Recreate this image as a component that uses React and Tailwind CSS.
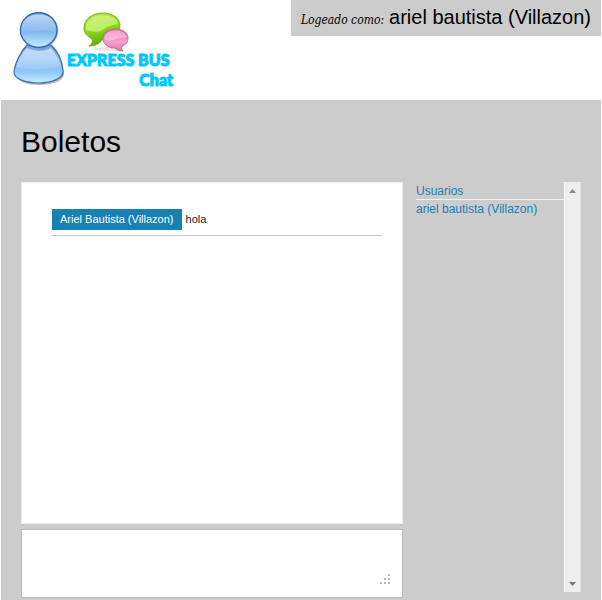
import React from "react";

function PersonIcon() {
  return (
    <svg viewBox="0 0 54 76" className="h-[76px] w-[54px] shrink-0" aria-hidden="true">
      <defs>
        <linearGradient id="bodyFill" x1="0" y1="0" x2="0" y2="1">
          <stop offset="0" stopColor="#6aa3e2" />
          <stop offset="0.35" stopColor="#8dbff3" />
          <stop offset="0.7" stopColor="#8ec6f8" />
          <stop offset="1" stopColor="#c9f1ff" />
        </linearGradient>
        <linearGradient id="headFill" x1="0" y1="0" x2="0" y2="1">
          <stop offset="0" stopColor="#5f9ade" />
          <stop offset="0.5" stopColor="#78b1ee" />
          <stop offset="1" stopColor="#c4efff" />
        </linearGradient>
        <linearGradient id="gloss" x1="0" y1="0" x2="0" y2="1">
          <stop offset="0" stopColor="#ffffff" stopOpacity="0.6" />
          <stop offset="1" stopColor="#ffffff" stopOpacity="0.12" />
        </linearGradient>
      </defs>
      <path d="M14 36C8 43 2 56 3 63c1 7 12 10 24 10s24-4 24-11C51 53 46 42 39 35z" fill="#6b7280" opacity="0.5" />
      <path d="M14 33C8 39 2 51 1 60c0 7 12 11 25 11s25-5 24-12C49 49 45 39 38 33z" fill="url(#bodyFill)" stroke="#3e6eb2" strokeWidth="1.2" />
      <path d="M14 36C9 41 5 48 3 55c13 3 30 3 45-1C46 47 42 41 38 36c-8 4-16 4-24 0z" fill="url(#gloss)" />
      <ellipse cx="26.500" cy="18.700" rx="19" ry="18" fill="#6b7280" opacity="0.4" />
      <ellipse cx="25.700" cy="18" rx="18.300" ry="17.400" fill="url(#headFill)" stroke="#3568ae" strokeWidth="1.300" />
      <path d="M9 20C7 8 16 2.500 26 2.500S45 9 42 19c-10-2-21 0-33 1z" fill="url(#gloss)" />
    </svg>
  );
}

function BubblesIcon() {
  return (
    <svg viewBox="0 0 48 40" className="h-10 w-12" aria-hidden="true">
      <defs>
        <linearGradient id="greenFill" x1="0" y1="0" x2="0.3" y2="1">
          <stop offset="0" stopColor="#aee63c" />
          <stop offset="0.55" stopColor="#93d91d" />
          <stop offset="1" stopColor="#5fa80a" />
        </linearGradient>
        <linearGradient id="pinkFill" x1="0" y1="0" x2="0" y2="1">
          <stop offset="0" stopColor="#e670ae" />
          <stop offset="0.6" stopColor="#f6a0cf" />
          <stop offset="1" stopColor="#e36fb0" />
        </linearGradient>
      </defs>
      <ellipse cx="27" cy="37" rx="15" ry="2" fill="#e6e6e6" />
      <path d="M20 1C8 1 1 8 1 16c0 5 3 8 8 11 1 3 0 5-3 7 6 0 10-2 13-6 11-1 18-7 18-14C37 6 30 1 20 1z" fill="url(#greenFill)" stroke="#69ab14" strokeWidth="0.8" />
      <path d="M3 18C2 9 9 3 20 3c9 0 14 4 15 9-5 1-9 1-14 5-7 5-13 2-18 1z" fill="#e4ffa8" opacity="0.55" />
      <path d="M32.500 17C25 17 20 21 20 26.500S25 36 32 36c2 2 5 3 8 3-2-2-2-3-1-5 4-1 6-4 6-8 0-5-5-9-12.500-9z" fill="url(#pinkFill)" stroke="#c8508f" strokeWidth="0.8" />
      <path d="M21.500 27c0-5 4-8.500 11-8.500 6 0 10 3 11 7-5 0-8 0-12 2-4 2-7 1-10-.5z" fill="#ffffff" opacity="0.35" />
    </svg>
  );
}

function Logo() {
  return (
    <div className="flex pt-3 pl-3">
      <PersonIcon />
      <div className="flex w-[106px] flex-col font-[Lato,sans-serif] text-[16px] leading-5 font-black whitespace-nowrap text-[#00c8ff] [-webkit-text-stroke:1px_#00c8ff]">
        <div className="h-[38px] pl-4">
          <BubblesIcon />
        </div>
        <span>EXPRESS BUS</span>
        <span className="text-right">Chat</span>
      </div>
    </div>
  );
}

function Message({ author, text }) {
  return (
    <li className="flex items-center gap-1 border-b border-[#c9c9c9] pb-[5px] text-[11px] leading-[21px] text-[#222]">
      <span className="bg-[#1781b5] px-2 text-white">{author}</span>
      <span>{text}</span>
    </li>
  );
}

function UserList() {
  return (
    <aside className="flex h-[410px] min-w-0 flex-1 text-[12px] text-[#1781b5]">
      <div className="min-w-0 flex-1 whitespace-nowrap">
        <h2 className="border-b border-[#f0f0f0] pt-px leading-4">Usuarios</h2>
        <a href="#ariel" className="block leading-[18px]">ariel bautista (Villazon)</a>
      </div>
      <div className="flex w-[17px] flex-col justify-between border-x border-[#f8f8f8] border-r-[#e3e3e3] bg-[#eeeeee]">
        <button type="button" aria-label="Subir" className="flex h-[17px] items-center justify-center">
          <svg viewBox="0 0 7 4" className="h-1 w-[7px]"><path d="M0 4L3.500 0 7 4z" fill="#888" /></svg>
        </button>
        <button type="button" aria-label="Bajar" className="flex h-[17px] items-center justify-center">
          <svg viewBox="0 0 7 4" className="h-1 w-[7px]"><path d="M0 0h7L3.500 4z" fill="#777" /></svg>
        </button>
      </div>
    </aside>
  );
}

export default function App() {
  return (
    <div className="min-h-screen bg-white px-px font-['Liberation_Sans',Arial,sans-serif] text-black">
      <header className="flex h-[100px] items-start justify-between">
        <Logo />
        <p className="flex h-9 items-baseline gap-[5px] bg-[#cccccc] px-[10px] leading-[34px] whitespace-nowrap">
          <em className="font-['DejaVu_Serif_Condensed','DejaVu_Serif',serif] text-[12px]">Logeado como:</em>
          <span className="text-[20px]">ariel bautista (Villazon)</span>
        </p>
      </header>
      <main className="bg-[#cccccc] px-5 pt-6 pb-[2px]">
        <h1 className="text-[30px] leading-9">Boletos</h1>
        <div className="mt-[22px] flex gap-[13px]">
          <section className="flex w-[382px] shrink-0 flex-col gap-[5px]">
            <ul className="h-[342px] border border-[#eeeeee] bg-white pt-[26px] pr-5 pl-[30px]">
              <Message author="Ariel Bautista (Villazon)" text="hola" />
            </ul>
            <div className="flex h-[69px] items-end border border-[#bbbbbb] bg-white pr-3 pb-[13px]">
              <textarea aria-label="Mensaje" className="h-full min-w-0 flex-1 resize-none bg-transparent p-2 text-[12px] outline-none" />
              <svg viewBox="0 0 10 10" className="h-[10px] w-[10px]" aria-hidden="true">
                <path d="M8 0h2v2h-2zM4 4h2v2h-2zM8 4h2v2h-2zM0 8h2v2h-2zM4 8h2v2h-2zM8 8h2v2h-2z" fill="#bbb" />
              </svg>
            </div>
          </section>
          <UserList />
        </div>
      </main>
    </div>
  );
}
